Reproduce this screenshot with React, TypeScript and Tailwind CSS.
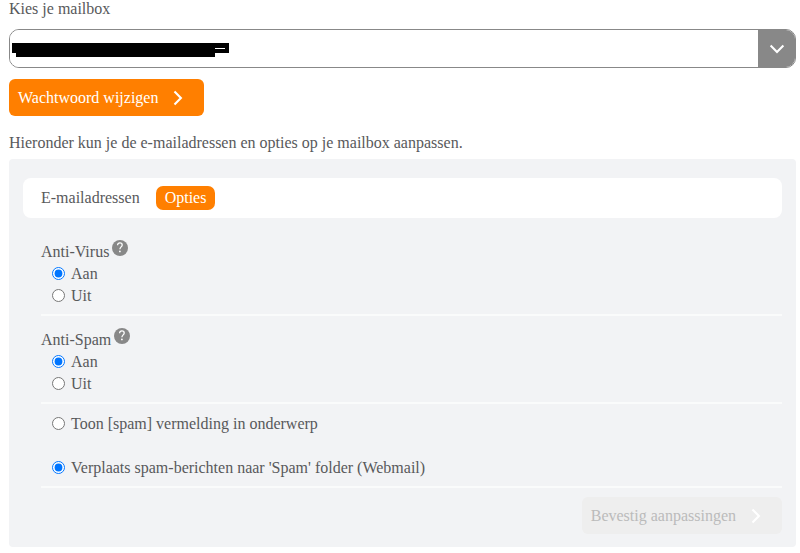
import { FC, useState } from 'react'

const Chevron: FC<{ className?: string }> = ({ className }) => (
  <svg viewBox="0 0 16 16" className={className} fill="none" stroke="currentColor" strokeWidth="2.1" aria-hidden="true">
    <path d="M4.5 1.6 L10.9 8 L4.5 14.4" />
  </svg>
)

const HelpIcon: FC<{ label: string }> = ({ label }) => (
  <button
    type="button"
    aria-label={label}
    className="-mt-2 flex h-4 w-4 items-center justify-center rounded-full bg-[#888] text-white"
  >
    <svg viewBox="0 0 16 16" className="h-4 w-4" fill="none" stroke="currentColor" strokeWidth="1.3" aria-hidden="true">
      <path d="M5.6 5.2 C5.6 3.7 6.5 2.9 7.9 2.9 C9.3 2.9 10.2 3.7 10.2 5 C10.2 6.8 7.9 7 7.9 9.2" />
      <circle cx="7.9" cy="11.4" r="0.9" fill="currentColor" stroke="none" />
    </svg>
  </button>
)

type RadioProps = {
  name: string
  label: string
  checked: boolean
  onChange: () => void
}

const Radio: FC<RadioProps> = ({ name, label, checked, onChange }) => (
  <label className="flex h-[22px] items-center gap-[6px] pl-[11px]">
    <input type="radio" name={name} checked={checked} onChange={onChange} className="mb-[2px] h-[13px] w-[13px]" />
    {label}
  </label>
)

const App: FC = () => {
  const [virus, setVirus] = useState(true)
  const [spam, setSpam] = useState(true)
  const [action, setAction] = useState('move')

  return (
    <div className="bg-white pr-1 pl-[9px] font-['Liberation_Serif',serif] text-base leading-[22px] text-[#58595b]">
      <label htmlFor="mailbox" className="block h-[29px] leading-[18px]">
        Kies je mailbox
      </label>
      <div className="relative flex h-[39px] overflow-hidden rounded-[10px] border border-[#888]">
        <select id="mailbox" className="min-w-0 flex-1 appearance-none bg-white px-3 outline-none">
          <option></option>
        </select>
        <span className="pointer-events-none flex w-[37px] items-center justify-center bg-[#888] text-white">
          <Chevron className="h-4 w-4 rotate-90" />
        </span>
        {/* hidden mailbox name */}
        <svg viewBox="0 0 217 14" className="pointer-events-none absolute top-[13px] left-[2px] h-[14px] w-[217px]" aria-hidden="true">
          <path d="M0 0 H217 V10 H203 V14 H4 V10 H0 Z" fill="#000" />
          <path d="M203 5.5 H213" stroke="#fff" />
        </svg>
      </div>

      <button
        type="button"
        className="mt-[11px] flex h-[37px] items-center rounded-md bg-[#ff7f00] pr-[18px] pl-[9px] text-white"
      >
        Wachtwoord wijzigen
        <Chevron className="ml-3 h-4 w-4" />
      </button>

      <p className="mt-4 mb-[5px]">Hieronder kun je de e-mailadressen en opties op je mailbox aanpassen.</p>

      <main className="rounded-[4px] bg-[#f2f3f5] px-[14px] pt-[19px] pb-[13px]">
        <nav className="flex h-10 items-center gap-4 rounded-lg bg-white px-[18px]">
          <a href="#adressen">E-mailadressen</a>
          <a href="#opties" className="rounded-[7px] bg-[#ff7f00] px-[9px] py-px text-white">
            Opties
          </a>
        </nav>

        <form className="pl-[18px]">
          <section className="border-b-2 border-[#fafbfb] pt-[23px] pb-[7px]">
            <h2 className="flex h-[22px] items-center gap-[3px]">
              Anti-Virus <HelpIcon label="Uitleg over Anti-Virus" />
            </h2>
            <Radio name="virus" label="Aan" checked={virus} onChange={() => setVirus(true)} />
            <Radio name="virus" label="Uit" checked={!virus} onChange={() => setVirus(false)} />
          </section>

          <section className="border-b-2 border-[#fafbfb] pt-[13px] pb-[7px]">
            <h2 className="flex h-[22px] items-center gap-[3px]">
              Anti-Spam <HelpIcon label="Uitleg over Anti-Spam" />
            </h2>
            <Radio name="spam" label="Aan" checked={spam} onChange={() => setSpam(true)} />
            <Radio name="spam" label="Uit" checked={!spam} onChange={() => setSpam(false)} />
          </section>

          <section className="flex flex-col gap-[22px] border-b-2 border-[#fafbfb] pt-[9px] pb-[7px]">
            <Radio
              name="action"
              label="Toon [spam] vermelding in onderwerp"
              checked={action === 'tag'}
              onChange={() => setAction('tag')}
            />
            <Radio
              name="action"
              label="Verplaats spam-berichten naar 'Spam' folder (Webmail)"
              checked={action === 'move'}
              onChange={() => setAction('move')}
            />
          </section>

          <button
            type="submit"
            disabled
            className="mt-[9px] ml-auto flex h-[37px] items-center rounded-md bg-[#eeeeee] pr-[18px] pl-[9px] text-[#bbbbbb]"
          >
            Bevestig aanpassingen
            <Chevron className="ml-3 h-4 w-4 text-white" />
          </button>
        </form>
      </main>
    </div>
  )
}

export default App
